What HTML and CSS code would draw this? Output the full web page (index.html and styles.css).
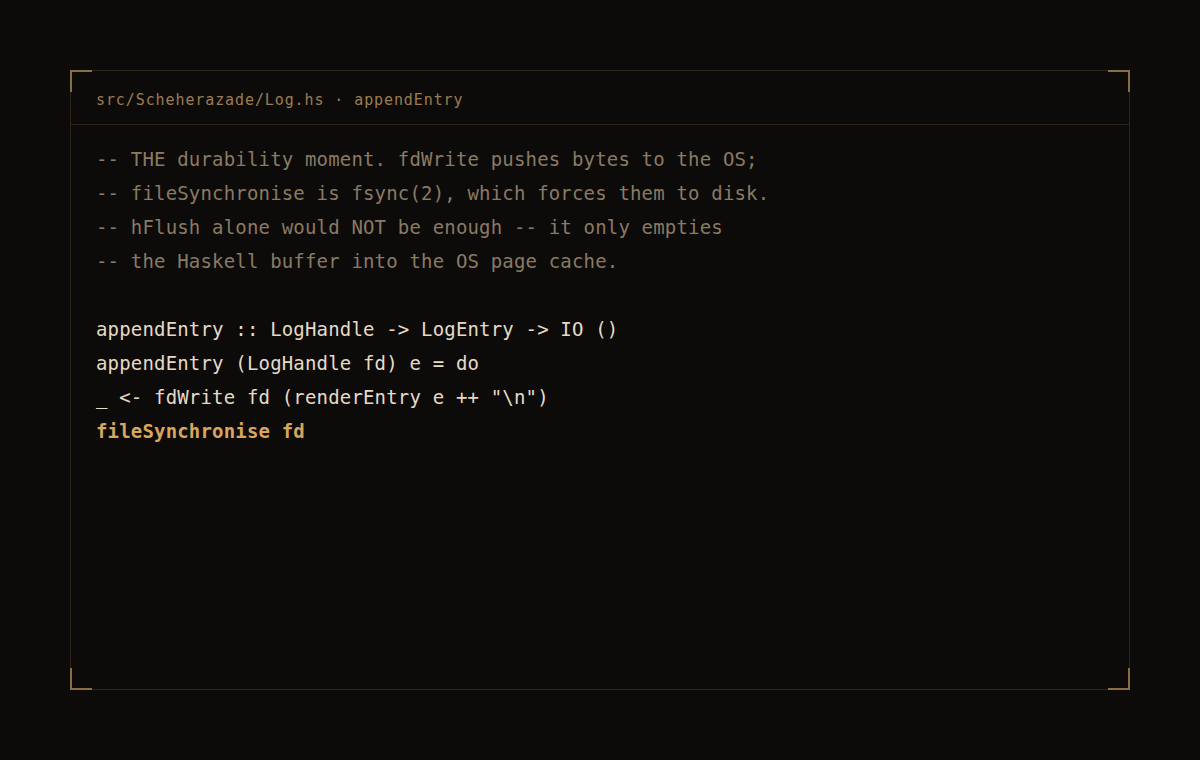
FILE: index.html
```html
<!DOCTYPE html>
<html>
<head>
<meta charset="utf-8">
<link rel="stylesheet" href="styles.css">
</head>
<body>
<div class="frame">
  <span class="corner tl"></span>
  <span class="corner tr"></span>
  <span class="corner bl"></span>
  <span class="corner br"></span>
  <div class="header">src/Scheherazade/Log.hs · appendEntry</div>
  <div class="code">
    <div class="line cm">-- THE durability moment. fdWrite pushes bytes to the OS;</div>
    <div class="line cm">-- fileSynchronise is fsync(2), which forces them to disk.</div>
    <div class="line cm">-- hFlush alone would NOT be enough -- it only empties</div>
    <div class="line cm">-- the Haskell buffer into the OS page cache.</div>
    <div class="line blank"></div>
    <div class="line">appendEntry :: LogHandle -&gt; LogEntry -&gt; IO ()</div>
    <div class="line">appendEntry (LogHandle fd) e = do</div>
    <div class="line">_ &lt;- fdWrite fd (renderEntry e ++ "\n")</div>
    <div class="line hl">fileSynchronise fd</div>
  </div>
</div>
</body>
</html>
```
FILE: styles.css
```css
html, body {
  margin: 0;
  padding: 0;
  background: #0c0b0a;
  width: 1200px;
  height: 760px;
  overflow: hidden;
}
body {
  padding: 70px;
  box-sizing: border-box;
  font-family: "DejaVu Sans Mono", monospace;
}
.frame {
  position: relative;
  width: 1060px;
  height: 620px;
  border: 1px solid #2e2419;
  box-sizing: border-box;
}
.corner {
  position: absolute;
  box-sizing: border-box;
  width: 22px;
  height: 22px;
  border-color: #8a6c45;
  border-style: solid;
  border-width: 0;
}
.tl { top: -1px; left: -1px; border-top-width: 2px; border-left-width: 2px; }
.tr { top: -1px; right: -1px; border-top-width: 2px; border-right-width: 2px; }
.bl { bottom: -1px; left: -1px; border-bottom-width: 2px; border-left-width: 2px; }
.br { bottom: -1px; right: -1px; border-bottom-width: 2px; border-right-width: 2px; }
.header {
  height: 54px;
  box-sizing: border-box;
  display: flex;
  align-items: center;
  padding: 5px 25px 0;
  border-bottom: 1px solid #2e2419;
  color: #9c7d52;
  font-size: 15px;
  letter-spacing: 0.9px;
}
.code {
  padding: 17px 25px;
  font-size: 19px;
  letter-spacing: 0.17px;
  color: #e6dac6;
}
.line {
  height: 34px;
  line-height: 34px;
  white-space: pre;
}
.cm { color: #8a7a63; }
.hl { color: #d9a55f; font-weight: bold; }
```
